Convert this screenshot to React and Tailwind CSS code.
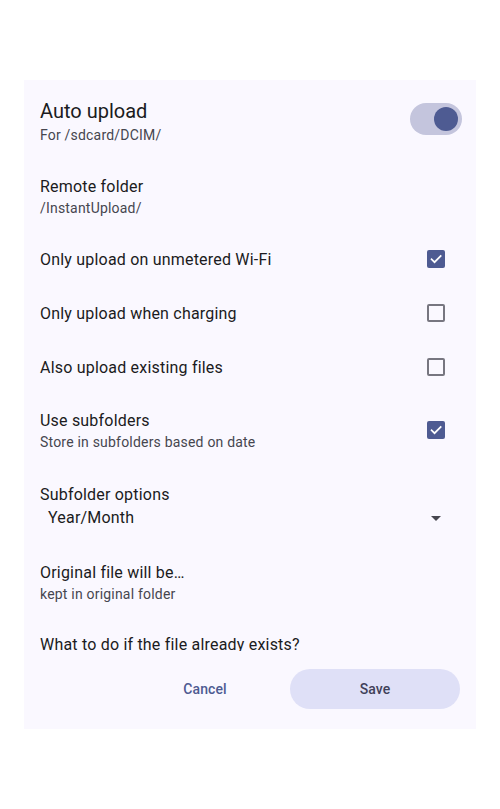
import React, { useState } from "react";

// Checkbox in Material style
const Box = ({ checked }) =>
  checked ? (
    <div className="w-[18px] h-[18px] rounded-[2px] bg-[#4e5b92] flex items-center justify-center">
      <svg width="14" height="14" viewBox="0 0 24 24" fill="none">
        <path d="M4.5 12.5l5 5L20 7" stroke="#fff" strokeWidth="3" strokeLinecap="square" />
      </svg>
    </div>
  ) : (
    <div className="w-[18px] h-[18px] rounded-[2px] border-2 border-[#777680]" />
  );

const CheckRow = ({ title, summary, checked }) => (
  <div className={`flex items-center pl-4 pr-[31px] ${summary ? "h-[72px]" : "h-[54px]"}`}>
    <div className="flex-1 pt-[2px]">
      <div className="text-[16px] leading-[22px] tracking-[0.2px] text-[#1b1b21]">{title}</div>
      {summary && <div className="text-[14px] leading-[20px] tracking-[0.2px] text-[#46464f]">{summary}</div>}
    </div>
    <Box checked={checked} />
  </div>
);

const TextRow = ({ title, summary }) => (
  <div className="flex flex-col justify-center h-[72px] pl-4 pt-[2px]">
    <div className="text-[16px] leading-[22px] tracking-[0.2px] text-[#1b1b21]">{title}</div>
    <div className="text-[14px] leading-[20px] tracking-[0.2px] text-[#46464f]">{summary}</div>
  </div>
);

export default function App() {
  const [enabled, setEnabled] = useState(true);

  return (
    <div
      className="w-[500px] h-[809px] bg-white pt-[80px] px-6"
      style={{ fontFamily: "Roboto, 'Noto Sans', sans-serif" }}
    >
      <div className="h-[649px] bg-[#faf8ff] flex flex-col">
        <div className="h-[571px] overflow-hidden">
          {/* master switch */}
          <div className="h-[80px] flex items-center pl-4 pr-[14px]">
            <div className="flex-1 pt-[2px]">
              <div className="text-[20px] leading-[28px] text-[#1b1b21]">Auto upload</div>
              <div className="text-[14px] leading-[20px] tracking-[0.2px] text-[#46464f]">For /sdcard/DCIM/</div>
            </div>
            <button
              onClick={() => setEnabled(!enabled)}
              className="w-[52px] h-[32px] rounded-full bg-[#c4c5dd] flex items-center justify-end px-1 mb-[2px]"
            >
              <span className="w-6 h-6 rounded-full bg-[#4e5b92]" />
            </button>
          </div>

          <TextRow title="Remote folder" summary="/InstantUpload/" />
          <CheckRow title="Only upload on unmetered Wi-Fi" checked />
          <CheckRow title="Only upload when charging" />
          <CheckRow title="Also upload existing files" />
          <CheckRow title="Use subfolders" summary="Store in subfolders based on date" checked />

          <div className="h-[80px] flex flex-col justify-center pl-4 pr-[31px] pt-[2px]">
            <div className="text-[16px] leading-[22px] tracking-[0.2px] text-[#1b1b21]">Subfolder options</div>
            <div className="flex items-center h-6 pl-2">
              <span className="flex-1 text-[16px] tracking-[0.2px] text-[#1b1b21]">Year/Month</span>
              <svg width="10" height="5" viewBox="0 0 10 5" className="mr-1">
                <path d="M0 0h10L5 5z" fill="#46464f" />
              </svg>
            </div>
          </div>

          <TextRow title="Original file will be…" summary="kept in original folder" />
          <TextRow title="What to do if the file already exists?" summary="Ask me every time" />
        </div>

        <div className="flex justify-end px-4 pt-[18px]">
          <button className="w-[170px] h-10 rounded-full text-[14px] font-medium tracking-[0.1px] text-[#4e5b92]">
            Cancel
          </button>
          <button className="w-[170px] h-10 rounded-full bg-[#dfe0f7] text-[14px] font-medium tracking-[0.1px] text-[#3f4159]">
            Save
          </button>
        </div>
      </div>
    </div>
  );
}
